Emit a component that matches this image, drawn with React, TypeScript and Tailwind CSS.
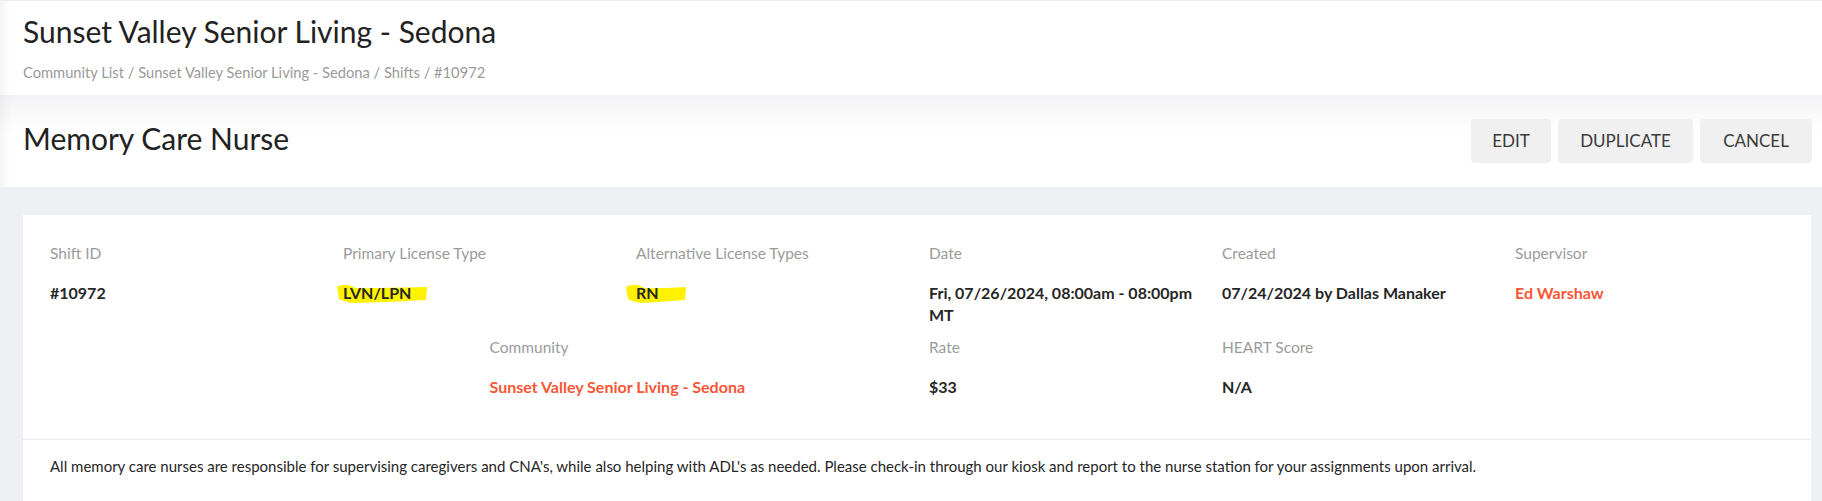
import React from 'react';

const font = { fontFamily: 'Lato, "Open Sans", Arial, sans-serif' };

interface FieldProps {
  label: string;
  children: React.ReactNode;
  span?: string;
}

function Field({ label, children, span = 'col-span-2' }: FieldProps) {
  return (
    <div className={`${span} px-3`}>
      <p className="text-[15.5px] leading-[22px] text-[#9b9b9b]">{label}</p>
      <div className="mt-[18px] text-[16px] leading-[22px] font-bold text-[#262626]">{children}</div>
    </div>
  );
}

// hand-drawn yellow marker stroke behind a value
function Highlight({ children, w, left = 6 }: { children: React.ReactNode; w: number; left?: number }) {
  return (
    <span className="relative inline-block">
      <svg
        className="absolute top-[1px]"
        style={{ left: -left }}
        width={w}
        height={21}
        viewBox={`0 0 ${w} 21`}
        preserveAspectRatio="none"
      >
        <path
          d={`M0 4 C6 1 12 1 18 5 C22 6 30 5 40 5 L${w} 4 L${w - 1} 17 L${w * 0.55} 19 L14 20 C9 19 4 17 2 16 Z`}
          fill="#fff200"
        />
      </svg>
      <span className="relative">{children}</span>
    </span>
  );
}

export default function App() {
  return (
    <div className="min-h-screen bg-[#eff0f4] text-[#222]" style={font}>
      {/* Community header */}
      <div className="bg-white border-t border-[#ececec] h-[95px] px-[23px] pt-[11px] shadow-[inset_14px_0_10px_-10px_rgba(0,0,0,0.05)]">
        <h1 className="text-[30px] leading-[38px] text-[#222]">Sunset Valley Senior Living - Sedona</h1>
        <p className="mt-[12px] text-[14.7px] leading-[20px] text-[#9a9a9a]">
          Community List / Sunset Valley Senior Living - Sedona / Shifts / #10972
        </p>
      </div>

      {/* Shift title bar */}
      <div className="h-[92px] flex items-start justify-between pl-[23px] pr-[10px] bg-[linear-gradient(to_bottom,#f3f3f5,#ffffff_40%)] shadow-[inset_14px_0_10px_-10px_rgba(0,0,0,0.05)]">
        <h2 className="mt-[24px] text-[30px] leading-[38px] text-[#222]">Memory Care Nurse</h2>
        <div className="mt-[24px] flex gap-[7px]">
          {[
            { label: 'EDIT', w: 'w-[80px]' },
            { label: 'DUPLICATE', w: 'w-[135px]' },
            { label: 'CANCEL', w: 'w-[112px]' },
          ].map((b) => (
            <button
              key={b.label}
              className={`${b.w} h-[44px] rounded-[4px] bg-[#f0f0f0] text-[17px] text-[#3a3a3a] flex items-center justify-center`}
            >
              {b.label}
            </button>
          ))}
        </div>
      </div>

      {/* Details card */}
      <div className="mt-[28px] ml-[23px] mr-[11px] bg-white">
        <div className="px-[15px] pt-[27px] pb-[41px]">
          <div className="grid grid-cols-12">
            <Field label="Shift ID">#10972</Field>
            <Field label="Primary License Type">
              <Highlight w={90}>LVN/LPN</Highlight>
            </Field>
            <Field label="Alternative License Types">
              <Highlight w={60} left={10}>RN</Highlight>
            </Field>
            <Field label="Date">Fri, 07/26/2024, 08:00am - 08:00pm MT</Field>
            <Field label="Created">07/24/2024 by Dallas Manaker</Field>
            <Field label="Supervisor">
              <span className="text-[#fa5535]">Ed Warshaw</span>
            </Field>
          </div>
          <div className="grid grid-cols-12 mt-[10px]">
            <div className="col-span-3" />
            <Field label="Community" span="col-span-3">
              <span className="text-[#fa5535]">Sunset Valley Senior Living - Sedona</span>
            </Field>
            <Field label="Rate">$33</Field>
            <Field label="HEART Score">N/A</Field>
          </div>
        </div>
        <div className="border-t border-[#ebebeb] px-[27px] pt-[15px] pb-[24px]">
          <p className="text-[15px] leading-[22px] text-[#262626]">
            All memory care nurses are responsible for supervising caregivers and CNA's, while also helping with ADL's as needed. Please check-in through our kiosk and report to the nurse station for your assignments upon arrival.
          </p>
        </div>
      </div>
    </div>
  );
}
